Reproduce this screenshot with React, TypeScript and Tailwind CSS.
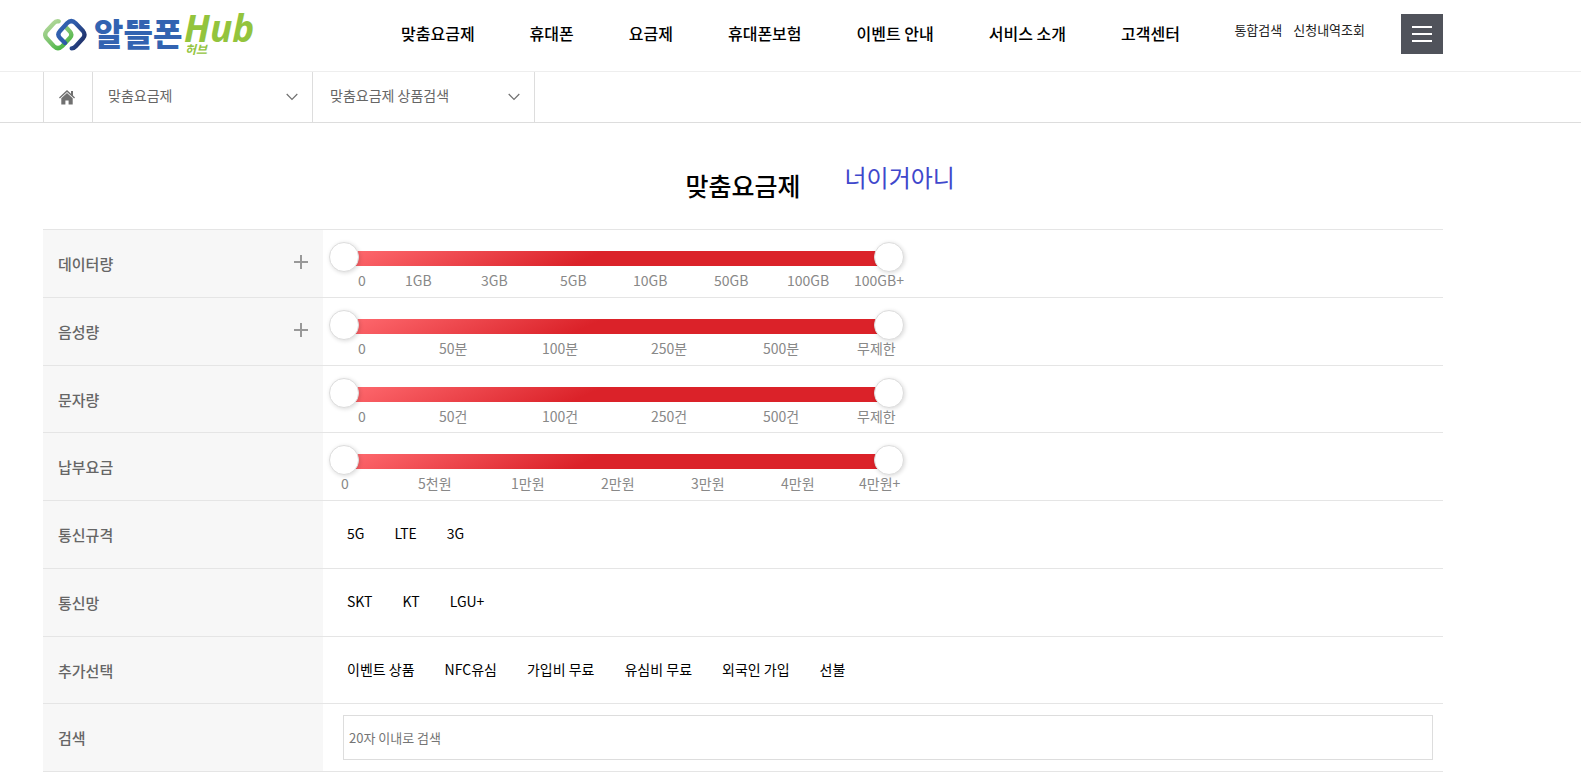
import React, { useState } from 'react';

const navItems = ['맞춤요금제', '휴대폰', '요금제', '휴대폰보험', '이벤트 안내', '서비스 소개', '고객센터'];

const amountTicks = 'pl-[35px] grid-cols-[81px_103px_109px_112px_94px]';

const Logo = () => (
  <svg className="overflow-visible" width="214" height="52" viewBox="0 0 214 52" role="img" aria-label="알뜰폰 Hub 허브">
    <defs>
      <linearGradient id="logoGreen" x1="0" y1="0" x2="0.6" y2="1">
        <stop offset="0" stopColor="#b9dba0" />
        <stop offset="0.5" stopColor="#8cc97b" />
        <stop offset="1" stopColor="#4fb748" />
      </linearGradient>
      <linearGradient id="logoBlue" x1="0" y1="0" x2="1" y2="0.6">
        <stop offset="0" stopColor="#3263b1" />
        <stop offset="0.5" stopColor="#2f5cab" />
        <stop offset="1" stopColor="#22356f" />
      </linearGradient>
    </defs>
    <svg x="0" y="5" width="44" height="33" viewBox="39 53 132 99" fill="none" strokeWidth="13" strokeLinecap="round">
      <path d="M86 63 Q78 61 71 69 L50 92 Q41 103 50 114 L71 137 Q84 150 97 137 L120 112 Q128 103 120 94 L110 83" stroke="url(#logoGreen)" />
      <path d="M105 128 L90 113 Q80 103 90 92 L111 69 Q124 56 137 69 L159 92 Q168 103 159 114 L138 137 Q132 144 125 144" stroke="url(#logoBlue)" />
    </svg>
    <text x="51" y="33" fontSize="32" fontWeight="900" fill="#3263b1" fontFamily="'Noto Sans CJK KR', sans-serif">알뜰폰</text>
    <text x="141" y="29" fontSize="37" fontWeight="700" fontStyle="italic" fill="#93c43d" fontFamily="'Open Sans', sans-serif">Hub</text>
    <text x="142" y="41" fontSize="12" fontWeight="700" fontStyle="italic" fill="#93c43d" fontFamily="'Noto Sans CJK KR', sans-serif">허브</text>
  </svg>
);

const HomeIcon = () => (
  <svg width="16" height="15" viewBox="0 0 16 15" fill="#707070">
    <path d="M8 0 L0 7.4 L0.9 8.4 L8 1.9 L15.1 8.4 L16 7.4 L14 5.5 V1 H12 V3.7 Z" />
    <path d="M8 3 L2.3 8.2 V14.5 H6.4 V10.4 H9.6 V14.5 H13.7 V8.2 Z" />
  </svg>
);

interface CrumbSelectProps {
  label: string;
  options: string[];
  className?: string;
}

const CrumbSelect = ({ label, options, className = '' }: CrumbSelectProps) => (
  <div className={`relative border-r border-[#dddddd] ${className}`}>
    <select aria-label={label} className="h-full w-full appearance-none bg-transparent pr-10 pl-[15px] pb-1 text-sm text-[#666666]">
      {options.map((option) => (
        <option key={option}>{option}</option>
      ))}
    </select>
    <svg className="pointer-events-none absolute top-[21px] right-[14px]" width="12" height="8" viewBox="0 0 12 8" fill="none" stroke="#707070" strokeWidth="1.2">
      <path d="M0.7 1 L6 6.3 L11.3 1" />
    </svg>
  </div>
);

interface RowProps {
  label: string;
  expandable?: boolean;
  children: React.ReactNode;
}

const Row = ({ label, expandable, children }: RowProps) => (
  <div className="flex border-b border-[#e5e5e5]">
    <div className="flex w-[280px] shrink-0 items-center justify-between bg-[#f7f7f7] pt-[2px] pr-[15px] pl-[15px]">
      <span className="text-[15px] font-medium text-[#666666]">{label}</span>
      {expandable && (
        <button type="button" aria-label={`${label} 펼치기`} className="pb-1">
          <svg width="14" height="14" viewBox="0 0 14 14" stroke="#999999" strokeWidth="2">
            <path d="M7 0 V14 M0 7 H14" />
          </svg>
        </button>
      )}
    </div>
    <div className="min-w-0 flex-1">{children}</div>
  </div>
);

const thumbClasses = `pointer-events-none absolute inset-0 h-[30px] w-full appearance-none bg-transparent
  [&::-webkit-slider-thumb]:pointer-events-auto [&::-webkit-slider-thumb]:h-[30px] [&::-webkit-slider-thumb]:w-[30px]
  [&::-webkit-slider-thumb]:appearance-none [&::-webkit-slider-thumb]:rounded-full [&::-webkit-slider-thumb]:border
  [&::-webkit-slider-thumb]:border-[#dddddd] [&::-webkit-slider-thumb]:bg-white
  [&::-webkit-slider-thumb]:shadow-[1px_1px_4px_rgba(0,0,0,0.15)]`;

interface RangeProps {
  label: string;
  ticks: string[];
  ticksClassName: string;
}

const Range = ({ label, ticks, ticksClassName }: RangeProps) => {
  const [low, setLow] = useState(0);
  const [high, setHigh] = useState(100);

  return (
    <div className="pt-3">
      <div className="relative ml-[6px] h-[30px] w-[575px]">
        <div className="px-[15px] pt-[9px]">
          <div className="h-[15px] bg-[linear-gradient(155deg,#ff6b70_0%,#db2229_45%)]" />
        </div>
        <input type="range" aria-label={`${label} 최소`} value={low} onChange={(e) => setLow(Math.min(+e.target.value, high))} className={thumbClasses} />
        <input type="range" aria-label={`${label} 최대`} value={high} onChange={(e) => setHigh(Math.max(+e.target.value, low))} className={thumbClasses} />
      </div>
      <div className={`grid auto-cols-max grid-flow-col text-sm leading-4 whitespace-nowrap text-[#888888] ${ticksClassName}`}>
        {ticks.map((tick) => (
          <span key={tick}>{tick}</span>
        ))}
      </div>
    </div>
  );
};

const Options = ({ items }: { items: string[] }) => {
  const [selected, setSelected] = useState<string[]>([]);
  const toggle = (item: string) =>
    setSelected(selected.includes(item) ? selected.filter((s) => s !== item) : [...selected, item]);

  return (
    <div className="flex h-full items-center gap-[30px] pl-6 pb-[2px] text-sm text-black">
      {items.map((item) => (
        <button key={item} type="button" aria-pressed={selected.includes(item)} onClick={() => toggle(item)} className="aria-pressed:text-[#db2229]">
          {item}
        </button>
      ))}
    </div>
  );
};

const App = () => (
  <div className="bg-white font-['Noto_Sans_CJK_KR',sans-serif] text-black">
    <header className="border-b border-[#eeeeee] pr-[138px] pl-[43px]">
      <div className="flex h-[71px] items-start">
        <a href="#" className="mt-[13px] shrink-0">
          <Logo />
        </a>
        <nav className="mt-5 ml-36 flex gap-[55px] text-base leading-[26px] font-medium whitespace-nowrap">
          {navItems.map((item) => (
            <a key={item} href="#">{item}</a>
          ))}
        </nav>
        <div className="mt-5 ml-auto flex gap-[11px] text-[13px] leading-5 whitespace-nowrap text-[#222222]">
          <a href="#">통합검색</a>
          <a href="#">신청내역조회</a>
        </div>
        <button type="button" aria-label="전체메뉴" className="mt-[14px] ml-9 flex h-10 w-[42px] flex-col items-center justify-center gap-[5px] bg-[#50535b]">
          <span className="h-[2px] w-5 bg-white" />
          <span className="h-[2px] w-5 bg-white" />
          <span className="h-[2px] w-5 bg-white" />
        </button>
      </div>
    </header>

    <div className="border-b border-[#dddddd] pl-[43px]">
      <div className="flex h-[50px]">
        <a href="#" aria-label="홈" className="flex w-[50px] items-center justify-center border-x border-[#dddddd] pr-[2px]">
          <HomeIcon />
        </a>
        <CrumbSelect label="메뉴" options={['맞춤요금제', '휴대폰', '요금제']} className="w-[220px]" />
        <CrumbSelect label="하위 메뉴" options={['맞춤요금제 상품검색']} className="w-[222px] pl-[2px]" />
      </div>
    </div>

    <main className="pr-[138px] pl-[43px]">
      <div className="flex justify-center pt-11 pb-[26px]">
        <div className="relative">
          <h1 className="text-[25px] leading-9 font-medium">맞춤요금제</h1>
          <span className="absolute -top-2 left-full ml-11 text-2xl leading-9 whitespace-nowrap text-[#3f48cc]">너이거아니</span>
        </div>
      </div>

      <form className="grid min-h-[543px] auto-rows-fr border-t border-[#e5e5e5]">
        <Row label="데이터량" expandable>
          <Range
            label="데이터량"
            ticks={['0', '1GB', '3GB', '5GB', '10GB', '50GB', '100GB', '100GB+']}
            ticksClassName="pl-[35px] grid-cols-[47px_76px_79px_73px_81px_73px_67px]"
          />
        </Row>
        <Row label="음성량" expandable>
          <Range label="음성량" ticks={['0', '50분', '100분', '250분', '500분', '무제한']} ticksClassName={amountTicks} />
        </Row>
        <Row label="문자량">
          <Range label="문자량" ticks={['0', '50건', '100건', '250건', '500건', '무제한']} ticksClassName={amountTicks} />
        </Row>
        <Row label="납부요금">
          <Range
            label="납부요금"
            ticks={['0', '5천원', '1만원', '2만원', '3만원', '4만원', '4만원+']}
            ticksClassName="pl-[18px] grid-cols-[77px_93px_90px_90px_90px_78px]"
          />
        </Row>
        <Row label="통신규격">
          <Options items={['5G', 'LTE', '3G']} />
        </Row>
        <Row label="통신망">
          <Options items={['SKT', 'KT', 'LGU+']} />
        </Row>
        <Row label="추가선택">
          <Options items={['이벤트 상품', 'NFC유심', '가입비 무료', '유심비 무료', '외국인 가입', '선불']} />
        </Row>
        <Row label="검색">
          <div className="flex h-full items-center pr-[10px] pl-5">
            <input
              type="text"
              aria-label="검색"
              maxLength={20}
              placeholder="20자 이내로 검색"
              className="h-[45px] w-full border border-[#dddddd] px-[5px] text-[13px] placeholder:text-[#757575]"
            />
          </div>
        </Row>
      </form>
    </main>
  </div>
);

export default App;
